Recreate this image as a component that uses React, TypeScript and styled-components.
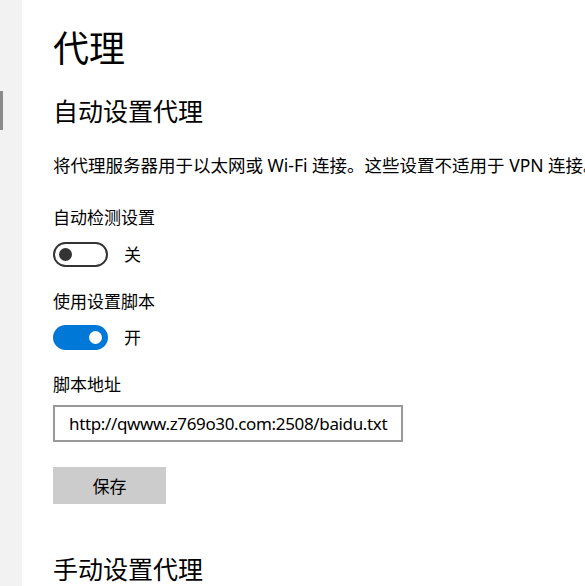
import React from "react";
import styled, { createGlobalStyle } from "styled-components";

const GlobalStyle = createGlobalStyle`
  html, body {
    margin: 0;
    padding: 0;
    background: #ffffff;
  }
  body {
    font-family: "Noto Sans", "Noto Sans CJK SC", sans-serif;
    color: #000000;
    overflow: hidden;
  }
`;

const Page = styled.div`
  display: flex;
  width: 585px;
  height: 586px;
  overflow: hidden;
`;

const Sidebar = styled.div`
  flex: 0 0 22px;
  background: #f2f2f2;
  display: flex;
  flex-direction: column;
`;

const SelectionBar = styled.div`
  margin-top: 91px;
  width: 3px;
  height: 39px;
  background: #8c8c8c;
`;

const Main = styled.main`
  flex: 1;
  padding: 25px 0 0 31px;
  display: flex;
  flex-direction: column;
  align-items: flex-start;
  white-space: nowrap;
`;

const PageTitle = styled.h1`
  margin: 0;
  font-size: 36px;
  font-weight: 400;
  line-height: 48px;
`;

const SectionTitle = styled.h2<{ $gap: number }>`
  margin: ${(p) => p.$gap}px 0 0 0;
  font-size: 25px;
  font-weight: 400;
  line-height: 34px;
`;

const Description = styled.p`
  margin: 25px 0 0 0;
  font-size: 17.5px;
  line-height: 24px;
`;

const FieldLabel = styled.div<{ $gap: number }>`
  margin-top: ${(p) => p.$gap}px;
  font-size: 17px;
  line-height: 24px;
`;

const ToggleRow = styled.div<{ $gap: number }>`
  margin-top: ${(p) => p.$gap}px;
  display: flex;
  align-items: center;
  gap: 16px;
  height: 25px;
`;

const Track = styled.div<{ $on: boolean }>`
  box-sizing: border-box;
  width: 55px;
  height: 25px;
  border-radius: 13px;
  border: 2px solid ${(p) => (p.$on ? "#0078d7" : "#333333")};
  background: ${(p) => (p.$on ? "#0078d7" : "#ffffff")};
  display: flex;
  align-items: center;
  justify-content: ${(p) => (p.$on ? "flex-end" : "flex-start")};
  padding: 0 4px;
`;

const Knob = styled.div<{ $on: boolean }>`
  width: 13px;
  height: 13px;
  border-radius: 50%;
  background: ${(p) => (p.$on ? "#ffffff" : "#333333")};
`;

const ToggleText = styled.span`
  font-size: 17px;
  line-height: 24px;
`;

const TextInput = styled.div`
  margin-top: 8px;
  box-sizing: border-box;
  width: 350px;
  height: 40px;
  border: 2px solid #999999;
  display: flex;
  align-items: center;
  padding-left: 14px;
  font-size: 17px;
  letter-spacing: -0.35px;
  overflow: hidden;
`;

const SaveButton = styled.button`
  margin-top: 25px;
  width: 113px;
  height: 40px;
  border: none;
  background: #cccccc;
  font-family: inherit;
  font-size: 17px;
  color: #000000;
  padding: 0;
`;

function Toggle({ on, label, gap }: { on: boolean; label: string; gap: number }) {
  return (
    <ToggleRow $gap={gap}>
      <Track $on={on}>
        <Knob $on={on} />
      </Track>
      <ToggleText>{label}</ToggleText>
    </ToggleRow>
  );
}

export default function App() {
  return (
    <>
      <GlobalStyle />
      <Page>
        <Sidebar>
          <SelectionBar />
        </Sidebar>
        <Main>
          <PageTitle>代理</PageTitle>
          <SectionTitle $gap={21}>自动设置代理</SectionTitle>
          <Description>将代理服务器用于以太网或 Wi-Fi 连接。这些设置不适用于 VPN 连接。</Description>
          <FieldLabel $gap={29}>自动检测设置</FieldLabel>
          <Toggle on={false} label="关" gap={12} />
          <FieldLabel $gap={23}>使用设置脚本</FieldLabel>
          <Toggle on={true} label="开" gap={11} />
          <FieldLabel $gap={23}>脚本地址</FieldLabel>
          <TextInput>http://qwww.z769o30.com:2508/baidu.txt</TextInput>
          <SaveButton>保存</SaveButton>
          <SectionTitle $gap={48}>手动设置代理</SectionTitle>
        </Main>
      </Page>
    </>
  );
}
